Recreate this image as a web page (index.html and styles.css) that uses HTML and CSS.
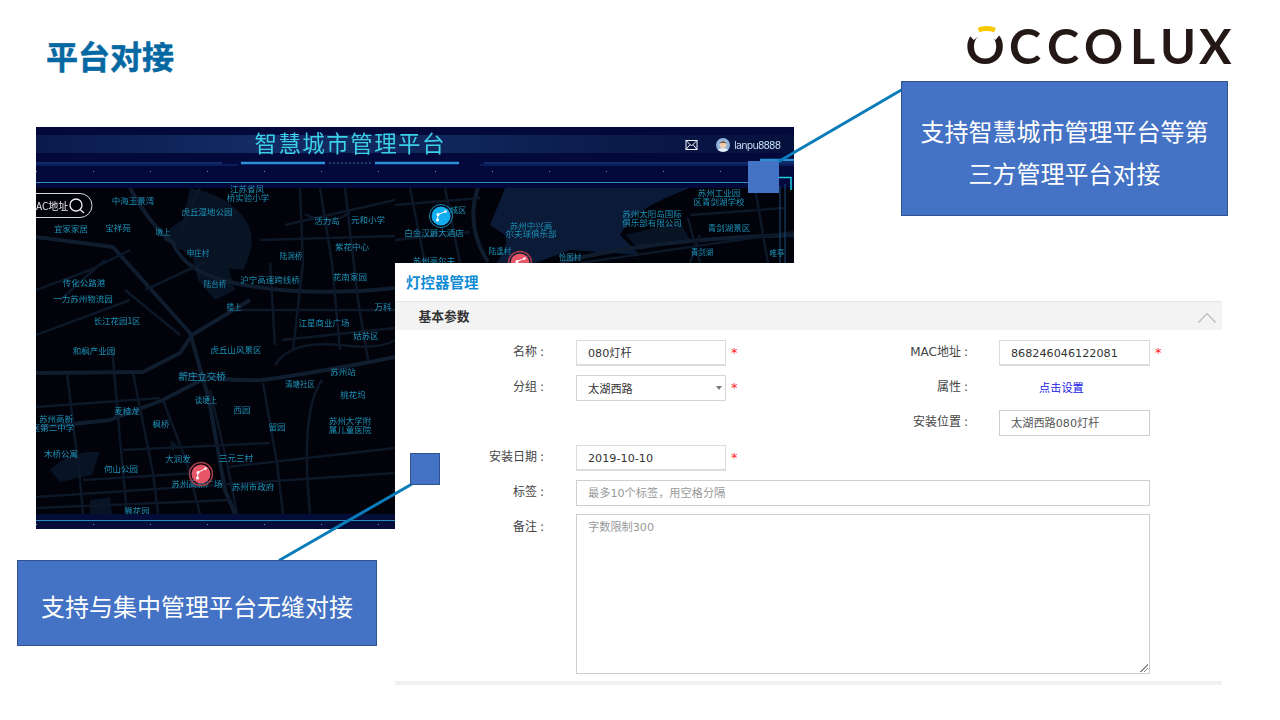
FILE: index.html
```html
<!DOCTYPE html>
<html lang="zh-CN">
<head>
<meta charset="utf-8">
<title>平台对接</title>
<link rel="stylesheet" href="styles.css">
</head>
<body>
<main class="slide">
  <header class="slide-head">
    <h1 class="slide-title">平台对接</h1>
    <svg class="logo" viewBox="960 20 280 50" width="280" height="50" role="img" aria-label="OCCOLUX">
      <text class="logo-text" x="965.500 1009 1047 1084 1130 1160 1199" y="64">OCCOLUX</text>
      <path class="logo-gap" d="M971 37 Q984 25 998 37"/>
      <path class="logo-arc" d="M978.500 30 Q986.500 27 995 30"/>
    </svg>
  </header>

  <section class="map">
    <svg class="map-svg" viewBox="36 127 758 402" width="758" height="402">
      <defs>
        <linearGradient id="band" x1="0" x2="1" y1="0" y2="0">
          <stop offset="0" stop-color="#0a1a4c"/>
          <stop offset=".3" stop-color="#142c64"/>
          <stop offset=".55" stop-color="#10265a"/>
          <stop offset="1" stop-color="#050f3c"/>
        </linearGradient>
      </defs>
      <rect class="map-bg" x="36" y="127" width="758" height="402"/>

      <g class="water">
        <path d="M190 188 Q225 195 240 213 Q262 235 243 270 L217 267 Q195 262 187 253 L163 240 Q170 225 183 220 Z"/>
        <path class="water-b" d="M505 188 L690 188 Q645 205 630 220 L620 235 L640 255 L570 250 L530 265 L495 265 Q510 245 505 235 L490 225 Z"/>
        <path d="M625 235 L680 222 L690 240 L640 250 Z"/>
        <path d="M50 470 Q70 450 100 452 L92 475 L60 482 Z"/>
        <path d="M90 500 L110 497 L112 514 L90 514 Z"/>
        <path d="M170 440 L178 445 L172 452 Z"/>
        <path d="M190 245 L225 255 L235 290 L215 300 L198 280 Z"/>
      </g>

      <g class="roads-major">
        <path d="M130 188 Q150 225 173 243 Q185 272 230 282 Q300 298 395 288"/>
        <path d="M36 237 L113 247 L190 333 L209 400 L225 490 L235 514"/>
        <path d="M36 373 L143 372 L180 353 L192 335 L250 300"/>
        <path d="M180 373 Q230 382 263 380 Q320 372 395 357"/>
        <path d="M36 428 L110 420 L163 400 L207 377"/>
        <path d="M478 188 Q465 225 488 262"/>
        <path d="M560 263 Q640 240 794 235"/>
      </g>
      <g class="roads">
        <path d="M67 373 L80 480 L83 514"/>
        <path d="M112 347 L120 440 L127 514"/>
        <path d="M133 373 L153 473 L158 514"/>
        <path d="M163 400 L187 463 L200 514"/>
        <path d="M210 390 L227 463 L237 514"/>
        <path d="M263 383 L277 463 L283 514"/>
        <path d="M322 380 Q300 410 310 514"/>
        <path d="M123 450 L270 443"/>
        <path d="M83 480 L197 473"/>
        <path d="M227 467 L395 448"/>
        <path d="M36 497 L395 473"/>
        <path d="M36 508 L230 500"/>
        <path d="M36 407 L160 398"/>
        <path d="M36 335 L130 300"/>
        <path d="M36 290 L90 270 L130 250"/>
        <path d="M60 300 L105 260"/>
        <path d="M125 290 L180 335"/>
        <path d="M145 290 L205 262"/>
        <path d="M200 188 L180 230"/>
        <path d="M300 188 L303 263 L293 350"/>
        <path d="M320 188 L332 263 L340 350"/>
        <path d="M345 188 L358 300 L368 360"/>
        <path d="M260 240 L395 236"/>
        <path d="M235 310 L395 310"/>
        <path d="M270 263 L275 345"/>
        <path d="M285 225 L395 200"/>
        <path d="M305 214 Q330 228 350 212"/>
        <path d="M282 340 L395 328"/>
        <path d="M275 365 Q290 340 340 345 Q380 350 395 340"/>
        <path d="M410 188 L425 263"/>
        <path d="M445 188 L460 263"/>
        <path d="M395 205 L480 198"/>
        <path d="M395 240 L470 232"/>
        <path d="M580 263 L794 232"/>
        <path d="M688 218 L700 263"/>
        <path d="M690 215 L785 208"/>
        <path d="M755 188 L768 263"/>
        <path d="M700 235 L690 263"/>
      </g>

      <rect class="map-head" x="36" y="127" width="758" height="61"/>
      <rect x="36" y="135" width="758" height="18" fill="url(#band)"/>
      <path class="h-line" d="M36 163 H222"/>
      <path class="h-line-dim" d="M36 165 H238"/>
      <path class="h-thick" d="M241 163 H325"/>
      <path class="h-thick" d="M375 163 H459"/>
      <path class="h-dots" d="M329 163 H372"/>
      <path class="h-line" d="M484 163 H794"/>
      <path class="h-line-dim" d="M480 165 H794"/>
      <path class="h-thick" d="M760 160 H794"/>
      <path class="h-ticks" d="M36 171.500 H794"/>
      <path class="h-bright" d="M36 182.500 H775"/>
      <path class="h-corner" d="M778 177.500 H791 V190"/>
      <path class="frame" d="M785 184 V263"/>
      <path class="frame" d="M780 186 V263"/>

      <text class="head-title" x="349.500" y="152" textLength="190">智慧城市管理平台</text>

      <g class="mail">
        <rect x="686" y="140.500" width="11" height="9"/>
        <path d="M686 140.500 L691.500 146 L697 140.500 M686 149.500 L690 144.500 M697 149.500 L693 144.500"/>
      </g>
      <circle class="avatar" cx="723" cy="145" r="7"/>
      <path class="avatar-body" d="M717.500 150 Q723 146 728.500 150 Q723 153.500 717.500 150 Z"/>
      <circle class="avatar-face" cx="723" cy="144.500" r="3.500"/>
      <path class="avatar-hair" d="M719 144 Q723 138.500 727 144 Q723 141.500 719 144 Z"/>
      <text class="user" x="734" y="149" textLength="47">lanpu8888</text>

      <g class="search">
        <rect x="10" y="193.500" width="82" height="24" rx="12"/>
        <circle cx="76" cy="205" r="6"/>
        <path d="M80 209.500 L84 213"/>
      </g>
      <text class="search-text" x="36" y="210">AC地址</text>

      <g class="labels">
        <text x="133" y="204">中海玉景湾</text>
        <text x="247" y="192">江苏省凤</text>
        <text x="248" y="201">桥实验小学</text>
        <text x="207" y="215">虎丘湿地公园</text>
        <text x="327" y="224">活力岛</text>
        <text x="368" y="223">元和小学</text>
        <text x="71" y="232">宜家家居</text>
        <text x="118" y="231">宝祥苑</text>
        <text class="sm" x="163" y="235">墩上</text>
        <text x="352" y="250">紫花中心</text>
        <text class="sm" x="198" y="256">申庄村</text>
        <text class="sm" x="291" y="259">陆洞桥</text>
        <text x="270" y="283">沪宁高速跨线桥</text>
        <text x="350" y="280">花南家园</text>
        <text x="84" y="286">传化公路港</text>
        <text class="sm" x="215" y="287">陆台桥</text>
        <text x="83" y="302">一力苏州物流园</text>
        <text x="383" y="310">万科</text>
        <text class="sm" x="234" y="310">楼上</text>
        <text x="117" y="324">长江花园1区</text>
        <text x="324" y="326">江星商业广场</text>
        <text x="366" y="339">姑苏区</text>
        <text x="94" y="354">和枫产业园</text>
        <text x="236" y="353">虎丘山风景区</text>
        <text class="lg" x="202" y="380">新庄立交桥</text>
        <text x="343" y="375">苏州站</text>
        <text class="sm" x="300" y="387">清塘社区</text>
        <text x="353" y="398">桃花坞</text>
        <text class="sm" x="206" y="403">谈埂上</text>
        <text x="242" y="413">西园</text>
        <text x="127" y="414">麦楂龙</text>
        <text x="56" y="422">苏州高新</text>
        <text x="53" y="431">区第二中学</text>
        <text x="161" y="427">枫桥</text>
        <text x="277" y="430">留园</text>
        <text x="350" y="424">苏州大学附</text>
        <text x="350" y="433">属儿童医院</text>
        <text x="61" y="457">木桥公寓</text>
        <text x="178" y="462">大润发</text>
        <text x="236" y="461">三元三村</text>
        <text x="121" y="472">何山公园</text>
        <text x="197" y="487">苏州高新广场</text>
        <text x="253" y="490">苏州市政府</text>
        <text x="137" y="514">狮花园</text>
        <text x="719" y="196">苏州工业园</text>
        <text x="719" y="205">区青剑湖学校</text>
        <text x="652" y="217">苏州太阳岛国际</text>
        <text x="652" y="226">俱乐部有限公司</text>
        <text x="729" y="231">青剑湖景区</text>
        <text x="531" y="229">苏州中兴高</text>
        <text x="531" y="237">尔夫球俱乐部</text>
        <text x="458" y="213">城区</text>
        <text x="434" y="236">白金汉爵大酒店</text>
        <text class="sm" x="500" y="254">陆逢村</text>
        <text class="sm" x="570" y="260">恰图村</text>
        <text class="sm" x="702" y="255">青剑湖</text>
        <text class="sm" x="777" y="256">唯亭</text>
        <text x="434" y="264">苏州高尔夫</text>
      </g>

      <g class="marker marker-blue">
        <circle class="halo" cx="441" cy="216" r="11.500"/>
        <circle class="disc" cx="441" cy="216" r="9.500"/>
        <path class="spark" d="M437.500 220 L438 214.500 L445.500 211.500"/>
        <circle class="dot" cx="437.500" cy="220" r="1.500"/>
        <circle class="dot" cx="438" cy="214.500" r="1.500"/>
        <circle class="dot" cx="445.500" cy="211.500" r="1.300"/>
      </g>
      <g class="marker marker-red">
        <circle class="halo" cx="520" cy="263" r="11.500"/>
        <circle class="disc" cx="520" cy="263" r="9.500"/>
        <path class="spark" d="M516.500 267 L517 261.500 L524.500 258.500"/>
        <circle class="dot" cx="517" cy="261.500" r="1.500"/>
        <circle class="dot" cx="524.500" cy="258.500" r="1.300"/>
      </g>
      <g class="marker marker-red">
        <circle class="halo" cx="201" cy="474" r="11.500"/>
        <circle class="disc" cx="201" cy="474" r="9.500"/>
        <path class="spark" d="M197.500 478 L198 472.500 L205.500 468.500"/>
        <circle class="dot" cx="197.500" cy="478" r="1.500"/>
        <circle class="dot" cx="198" cy="472.500" r="1.500"/>
        <circle class="dot" cx="205.500" cy="468.500" r="1.300"/>
      </g>

      <rect class="foot" x="36" y="514" width="758" height="15"/>
      <path class="foot-line" d="M36 520.500 H794"/>
      <path class="h-ticks" d="M36 524.500 H794"/>
    </svg>
  </section>

  <section class="panel">
    <h2 class="panel-title">灯控器管理</h2>
    <div class="section-head">
      <span>基本参数</span>
      <svg class="chevron" viewBox="0 0 18 12" width="18" height="12"><path d="M0.500 11.500 L9 2.500 L17.500 11.500"/></svg>
    </div>
    <div class="form-grid">
      <div class="label">名称<span class="colon">:</span></div>
      <div class="field">080灯杆</div>
      <div class="star">*</div>
      <div class="label label-r">MAC地址<span class="colon">:</span></div>
      <div class="field field-r">868246046122081</div>
      <div class="star star-r">*</div>

      <div class="label">分组<span class="colon">:</span></div>
      <div class="field field-select">太湖西路<i class="caret"></i></div>
      <div class="star">*</div>
      <div class="label label-r">属性<span class="colon">:</span></div>
      <a class="link field-r">点击设置</a>

      <div class="label label-r row-skip">安装位置<span class="colon">:</span></div>
      <div class="field field-r field-dark">太湖西路080灯杆</div>

      <div class="label">安装日期<span class="colon">:</span></div>
      <div class="field">2019-10-10</div>
      <div class="star">*</div>

      <div class="label">标签<span class="colon">:</span></div>
      <div class="field field-wide placeholder">最多10个标签，用空格分隔</div>

      <div class="label label-top">备注<span class="colon">:</span></div>
      <div class="field field-wide field-area placeholder">字数限制300<i class="grip"></i></div>
    </div>
    <div class="panel-foot"></div>
  </section>

  <svg class="connectors" viewBox="0 0 1280 720" width="1280" height="720">
    <path d="M776 163 L903 89"/>
    <path d="M412 484 L279 560.500"/>
  </svg>
  <div class="node node-a"></div>
  <div class="node node-b"></div>

  <aside class="callout callout-a">支持智慧城市管理平台等第<br>三方管理平台对接</aside>
  <aside class="callout callout-b">支持与集中管理平台无缝对接</aside>
</main>
</body>
</html>
```

FILE: styles.css
```css
* { box-sizing: border-box; }
html, body { margin: 0; padding: 0; }
body {
  background: #fff;
  font-family: "Noto Sans CJK SC", "Noto Sans", sans-serif;
}
.slide {
  position: relative;
  width: 1280px;
  height: 720px;
  overflow: hidden;
  background: #fff;
}
.slide-head {
  display: flex;
  justify-content: space-between;
  align-items: flex-start;
  padding: 20px 40px 0 46px;
}
.slide-title {
  margin: 11px 0 0;
  font-size: 32px;
  line-height: 48px;
  font-weight: 700;
  color: #0668a2;
  -webkit-text-stroke: 0.5px #0668a2;
}
.logo { display: block; overflow: visible; }
.logo-text {
  font-family: Lato, "Liberation Sans", sans-serif;
  font-weight: 700;
  font-size: 48.500px;
  fill: #231815;
}
.logo-gap { fill: none; stroke: #fff; stroke-width: 8; }
.logo-arc { fill: none; stroke: #f8c800; stroke-width: 5; }

/* map screenshot */
.map {
  position: absolute;
  left: 36px;
  top: 127px;
  width: 758px;
  height: 402px;
  overflow: hidden;
}
.map-svg { display: block; filter: blur(0.35px); }
.map-bg { fill: #01020a; }
.water path { fill: #081324; }
.water .water-b { fill: #0b1a36; }
.roads-major path, .roads path { fill: none; stroke-linejoin: round; }
.roads-major path { stroke: #0f1d2f; stroke-width: 4; }
.roads path { stroke: #0c1828; stroke-width: 2.500; }
.map-head { fill: #03093a; }
.h-line { stroke: #1e4e96; stroke-width: 1; fill: none; }
.h-line-dim { stroke: #12307a; stroke-width: 1; fill: none; }
.h-thick { stroke: #2d8fd8; stroke-width: 2.500; fill: none; }
.h-dots { stroke: #3a6fa8; stroke-width: 1; stroke-dasharray: 2 2; fill: none; }
.h-ticks { stroke: #6a8fb8; stroke-width: 1; stroke-dasharray: 1 56; fill: none; }
.h-bright { stroke: #2a8fc0; stroke-width: 1; fill: none; }
.h-corner { stroke: #22d0e0; stroke-width: 1.500; fill: none; }
.frame { stroke: #1a4a7a; stroke-width: 1; fill: none; }
.head-title {
  font-size: 22.500px;
  fill: #3ccfe8;
  text-anchor: middle;
}
.mail rect { fill: #0a1440; stroke: #f0f4ff; stroke-width: 1; }
.mail path { fill: none; stroke: #f0f4ff; stroke-width: 1; }
.avatar { fill: #8fb4dc; }
.avatar-body { fill: #e8eef6; }
.avatar-face { fill: #f2cdb0; }
.avatar-hair { fill: #4a3a30; }
.user {
  font-family: "DejaVu Sans", sans-serif;
  font-size: 10px;
  fill: #c4dcf2;
}
.search rect { fill: #01020a; stroke: #d8d8d8; stroke-width: 1; }
.search circle, .search path { fill: none; stroke: #f0f0f0; stroke-width: 1.300; }
.search-text { font-size: 10px; fill: #e8e8e8; }
.labels text {
  font-size: 8.500px;
  fill: #1c93b8;
  text-anchor: middle;
}
.labels .sm { font-size: 7.500px; }
.labels .lg { font-size: 9.500px; }
.marker .halo { fill: none; stroke-width: 1; }
.marker-blue .disc { fill: #12aef0; }
.marker-blue .halo { stroke: #1689c0; }
.marker-red .disc { fill: #e8566a; }
.marker-red .halo { stroke: #a8404c; stroke-width: 1.500; }
.marker .spark { fill: none; stroke: #fff; stroke-width: 1; }
.marker .dot { fill: #fff; }
.foot { fill: #040c38; }
.foot-line { stroke: #2a8fc0; stroke-width: 1; fill: none; }

/* form panel */
.panel {
  position: absolute;
  left: 395px;
  top: 263px;
  width: 827px;
  height: 422px;
  background: #fff;
  display: flex;
  flex-direction: column;
  color: #333;
}
.panel-title {
  margin: 0;
  height: 38px;
  padding: 0 0 0 11px;
  font-size: 14.500px;
  line-height: 37px;
  font-weight: 700;
  color: #0f8bd6;
}
.section-head {
  display: flex;
  align-items: center;
  justify-content: space-between;
  height: 29px;
  padding: 0 6px 0 23.500px;
  background: #f3f3f3;
  border-top: 1px solid #e6e6e6;
  font-size: 12.750px;
  line-height: 26px;
  font-weight: 700;
  color: #333;
}
.section-head span { margin-top: -1px; }
.chevron { display: block; margin-top: 1px; }
.chevron path { fill: none; stroke: #bbb; stroke-width: 1.200; }
.form-grid {
  display: grid;
  grid-template-columns: 149px 32px 150px 26px 216px 31px 151px 24px;
  grid-template-rows: 26px 26px 26px 26px 25px 160px;
  row-gap: 9px;
  padding-top: 10px;
  font-size: 11.200px;
  flex: 1;
  align-content: start;
}
.label {
  grid-column: 1;
  font-family: "DejaVu Sans", "Noto Sans CJK SC", sans-serif;
  font-size: 12px;
  line-height: 25px;
  text-align: right;
  color: #444;
  white-space: nowrap;
}
.colon { margin-left: 3px; }
.label-r { grid-column: 5; }
.label-top { line-height: 27px; }
.row-skip { grid-row: 3; }
.field {
  grid-column: 3;
  height: 26px;
  padding-left: 11px;
  border: 1px solid #dcdcdc;
  border-bottom-width: 2px;
  font-family: "DejaVu Sans", "Noto Sans CJK SC", sans-serif;
  font-size: 11.200px;
  line-height: 25px;
  color: #333;
  background: #fff;
  white-space: nowrap;
}
.field-r { grid-column: 7; }
.field-dark { border-color: #cfcfcf; border-bottom-width: 1px; color: #555; }
.field-select { position: relative; border-color: #d4d4d4; border-bottom-width: 1px; line-height: 27px; }
.caret {
  position: absolute;
  right: 3px;
  top: 10px;
  border: 3.500px solid transparent;
  border-top: 4px solid #777;
  border-bottom: 0;
}
.field-wide {
  grid-column: 3 / 8;
  width: 574px;
  border-color: #cfcfcf;
  border-bottom-width: 1px;
}
.field-area { position: relative; height: 160px; line-height: 26px; }
.placeholder { color: #999; }
.grip {
  position: absolute;
  right: 1px;
  bottom: 1px;
  width: 8px;
  height: 8px;
  background: linear-gradient(135deg, transparent 50%, #888 50%, #888 58%, transparent 58%, transparent 72%, #888 72%, #888 80%, transparent 80%);
}
.star {
  grid-column: 4;
  padding-left: 5px;
  color: #f22;
  font-family: "DejaVu Sans", sans-serif;
  font-size: 13px;
  line-height: 26px;
}
.star-r { grid-column: 8; padding-left: 5px; }
.link {
  line-height: 24px;
  padding-left: 40px;
  color: #2020e8;
}
.panel-foot {
  height: 4px;
  background: #f1f1f1;
}

/* callouts and connectors lying over the slide */
.connectors {
  position: absolute;
  left: 0;
  top: 0;
  pointer-events: none;
}
.connectors path { stroke: #0a7cb9; stroke-width: 3; fill: none; }
.node {
  position: absolute;
  width: 31px;
  height: 32px;
  background: #4472c4;
  border: 1px solid #2f528f;
}
.node-a { left: 748px; top: 161px; border-color: #4472c4; }
.node-b { left: 410px; top: 453px; width: 30px; }
.callout {
  position: absolute;
  display: flex;
  align-items: center;
  justify-content: center;
  text-align: center;
  background: #4472c4;
  border: 1px solid #2f528f;
  color: #fff;
  font-size: 24px;
  line-height: 42px;
  padding-top: 6px;
}
.callout-a { left: 901px; top: 81px; width: 327px; height: 135px; }
.callout-b { left: 17px; top: 560px; width: 360px; height: 86px; }
```
